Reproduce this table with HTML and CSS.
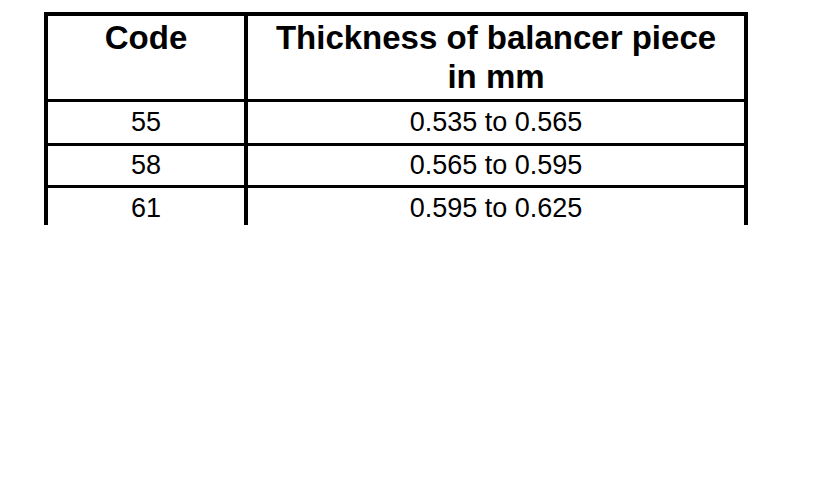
FILE: index.html
```html
<!DOCTYPE html>
<html>
<head>
<meta charset="utf-8">
<link rel="stylesheet" href="styles.css">
</head>
<body>
<div class="sheet">
  <div class="table">
    <div class="cell head c1">Code</div>
    <div class="cell head c2">Thickness of balancer piece<br>in mm</div>
    <div class="cell row1 c1">55</div>
    <div class="cell row1 c2">0.535 to 0.565</div>
    <div class="cell row2 c1">58</div>
    <div class="cell row2 c2">0.565 to 0.595</div>
    <div class="cell row3 c1">61</div>
    <div class="cell row3 c2">0.595 to 0.625</div>
  </div>
</div>
</body>
</html>
```

FILE: styles.css
```css
html, body {
  margin: 0;
  padding: 0;
  background: #fff;
}
.sheet {
  padding: 12px 0 0 44px;
  height: 490px;
  box-sizing: border-box;
}
.table {
  width: 704px;
  height: 213px;
  overflow: hidden;
  box-sizing: border-box;
  border-top: 4px solid #000;
  border-left: 4px solid #000;
  border-right: 4px solid #000;
  display: grid;
  grid-template-columns: 200px 496px;
  grid-template-rows: 86px 44px 42px 41px;
  font-family: "Liberation Sans", Arial, sans-serif;
  color: #000;
}
.cell {
  text-align: center;
  box-sizing: border-box;
}
.c1 {
  border-right: 4px solid #000;
}
.head {
  border-bottom: 3px solid #000;
  font-weight: bold;
  font-size: 33px;
  line-height: 39px;
  padding-top: 2px;
}
.row1, .row2 {
  border-bottom: 3px solid #000;
}
.row1, .row2, .row3 {
  font-size: 27px;
  line-height: 27px;
  display: flex;
  align-items: center;
  justify-content: center;
}
.row3 {
  height: 41px;
}
```
